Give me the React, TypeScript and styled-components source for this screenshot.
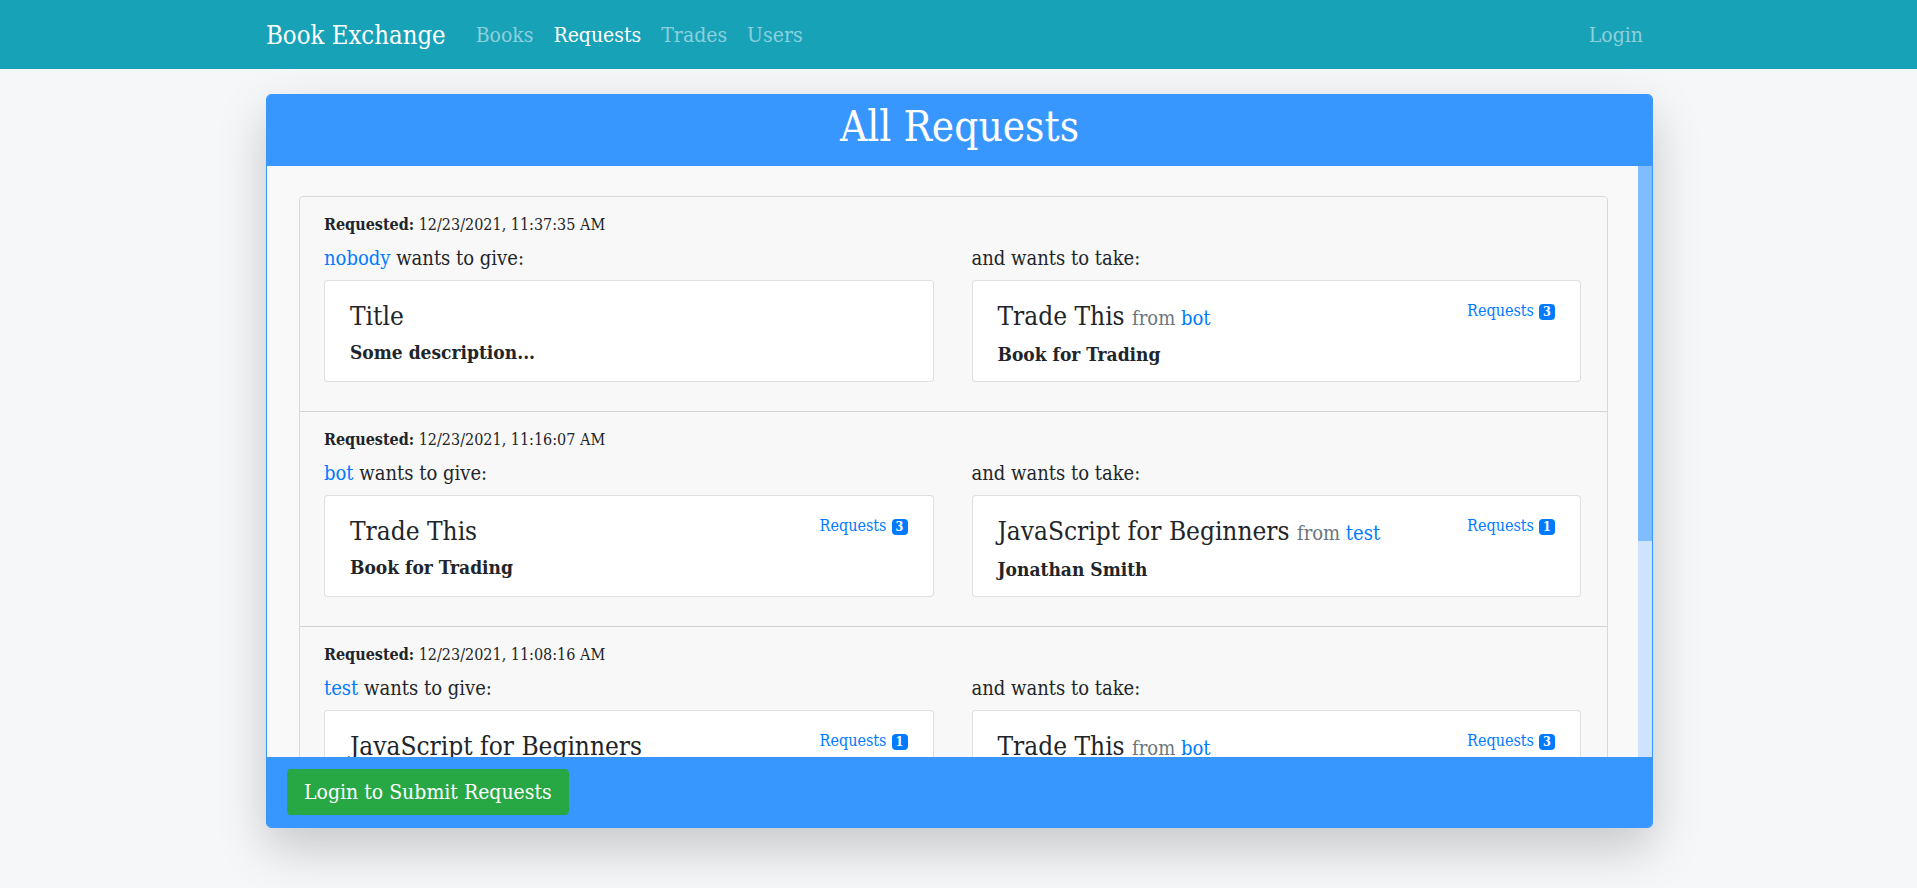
import React from "react";
import styled, { createGlobalStyle } from "styled-components";

const GlobalStyle = createGlobalStyle`
  html, body {
    margin: 0;
    padding: 0;
  }
  body {
    min-height: 100vh;
    background: #f6f7f9;
    font-family: "DejaVu Serif Condensed", "DejaVu Serif", serif;
    font-stretch: condensed;
    font-size: 20px;
    line-height: 1.5;
    color: #212529;
  }
  * { box-sizing: border-box; }
`;

const NavBar = styled.nav`
  background: #17a2b8;
  height: 69px;
`;

const NavInner = styled.div`
  width: 1389px;
  margin: 0 auto;
  padding-left: 2px;
  height: 100%;
  display: flex;
  align-items: center;
`;

const Brand = styled.a`
  font-size: 25.5px;
  line-height: 36px;
  color: #fff;
  margin-right: 20px;
  text-decoration: none;
`;

const NavLinks = styled.div`
  display: flex;
  align-items: center;
  flex: 1;
`;

const NavLink = styled.a<{ $active?: boolean }>`
  padding: 0 10px;
  font-size: 21px;
  line-height: 30px;
  color: ${(p) => (p.$active ? "#ffffff" : "rgba(255, 255, 255, 0.5)")};
  text-decoration: none;
`;

const Main = styled.main`
  width: 1389px;
  margin: 0 auto;
  padding: 25px 0 40px 2px;
`;

const Panel = styled.section`
  height: 734px;
  border: 1px solid #3797ff;
  border-radius: 5px;
  overflow: hidden;
  display: flex;
  flex-direction: column;
  background: #f9f9f9;
  box-shadow: 0 20px 50px rgba(0, 0, 0, 0.2);
`;

const PanelHeader = styled.header`
  height: 71px;
  flex: none;
  background: #3797ff;
  padding-top: 7px;
`;

const PanelTitle = styled.h1`
  margin: 0;
  font-size: 42px;
  line-height: 50px;
  font-weight: normal;
  color: #fff;
  text-align: center;
`;

const ScrollRow = styled.div`
  flex: 1;
  min-height: 0;
  display: flex;
`;

const ScrollContent = styled.div`
  flex: 1;
  min-width: 0;
  overflow: hidden;
  padding: 30px 30px 30px 32px;
  background: #f9f9f9;
`;

const ScrollTrack = styled.div`
  width: 14px;
  flex: none;
  background: #cfe4fc;
`;

const ScrollThumb = styled.div`
  width: 100%;
  background: #80bdff;
`;

const RequestList = styled.ul`
  list-style: none;
  margin: 0;
  padding: 0;
  border: 1px solid rgba(0, 0, 0, 0.125);
  border-radius: 4px;
  overflow: hidden;
`;

const RequestRow = styled.li`
  background: #f8f8f8;
  padding: 16px 26px 29px 24px;

  & + & {
    border-top: 1px solid rgba(0, 0, 0, 0.15);
  }
`;

const MetaLine = styled.div`
  font-size: 16px;
  line-height: 24px;
  margin-bottom: 6px;
`;

const Columns = styled.div`
  display: grid;
  grid-template-columns: 1fr 1fr;
  column-gap: 38px;
`;

const Label = styled.div`
  font-size: 20px;
  line-height: 30px;
  margin-bottom: 7px;
`;

const UserLink = styled.a`
  color: #007bff;
  text-decoration: none;
`;

const BookCard = styled.div`
  background: #fff;
  border: 1px solid rgba(0, 0, 0, 0.125);
  border-radius: 4px;
  padding: 20px 25px 17px;
  height: 102px;
`;

const CardTop = styled.div`
  display: flex;
  justify-content: space-between;
  align-items: flex-start;
`;

const BookTitle = styled.h5`
  margin: 0 0 8px;
  font-size: 26px;
  line-height: 31px;
  font-weight: normal;
  color: #212529;
`;

const From = styled.small`
  font-size: 20px;
  color: #6c757d;
`;

const RequestsLink = styled.a`
  font-size: 16px;
  line-height: 19px;
  color: #007bff;
  text-decoration: none;
  white-space: nowrap;
`;

const Badge = styled.span`
  display: inline-block;
  min-width: 16px;
  height: 16px;
  line-height: 16px;
  padding: 0 3px;
  margin-left: 5px;
  border-radius: 4px;
  background: #007bff;
  color: #fff;
  font-size: 12.5px;
  font-weight: bold;
  text-align: center;
`;

const Description = styled.div`
  font-size: 19px;
  line-height: 24px;
  font-weight: bold;
`;

const PanelFooter = styled.footer`
  height: 70px;
  flex: none;
  background: #3797ff;
  padding: 12px 20px;
`;

const GreenButton = styled.button`
  font-family: inherit;
  font-stretch: condensed;
  font-size: 21px;
  line-height: 30px;
  padding: 7px 16px;
  color: #fff;
  background: #28a745;
  border: 1px solid #28a745;
  border-radius: 4px;
  cursor: pointer;
`;

type Book = {
  title: string;
  desc: string;
  owner?: string;
  requests?: number;
};

type Request = {
  time: string;
  user: string;
  give: Book;
  take: Book;
};

const requests: Request[] = [
  {
    time: "12/23/2021, 11:37:35 AM",
    user: "nobody",
    give: { title: "Title", desc: "Some description..." },
    take: { title: "Trade This", desc: "Book for Trading", owner: "bot", requests: 3 },
  },
  {
    time: "12/23/2021, 11:16:07 AM",
    user: "bot",
    give: { title: "Trade This", desc: "Book for Trading", requests: 3 },
    take: { title: "JavaScript for Beginners", desc: "Jonathan Smith", owner: "test", requests: 1 },
  },
  {
    time: "12/23/2021, 11:08:16 AM",
    user: "test",
    give: { title: "JavaScript for Beginners", desc: "Jonathan Smith", requests: 1 },
    take: { title: "Trade This", desc: "Book for Trading", owner: "bot", requests: 3 },
  },
  {
    time: "12/22/2021, 10:42:03 PM",
    user: "nobody",
    give: { title: "Title", desc: "Some description..." },
    take: { title: "JavaScript for Beginners", desc: "Jonathan Smith", owner: "test", requests: 1 },
  },
];

// visible height of the scroll area vs. full height of its content
const VIEWPORT_HEIGHT = 591;
const CONTENT_HEIGHT = 931;

function BookBox({ book }: { book: Book }) {
  return (
    <BookCard>
      <CardTop>
        <BookTitle>
          {book.title}
          {book.owner && (
            <>
              {" "}
              <From>
                from <UserLink href="#">{book.owner}</UserLink>
              </From>
            </>
          )}
        </BookTitle>
        {book.requests !== undefined && (
          <RequestsLink href="#">
            Requests<Badge>{book.requests}</Badge>
          </RequestsLink>
        )}
      </CardTop>
      <Description>{book.desc}</Description>
    </BookCard>
  );
}

export default function App() {
  const thumbHeight = Math.round((VIEWPORT_HEIGHT * VIEWPORT_HEIGHT) / CONTENT_HEIGHT);
  return (
    <>
      <GlobalStyle />
      <NavBar>
        <NavInner>
          <Brand href="#">Book Exchange</Brand>
          <NavLinks>
            <NavLink href="#">Books</NavLink>
            <NavLink href="#" $active>
              Requests
            </NavLink>
            <NavLink href="#">Trades</NavLink>
            <NavLink href="#">Users</NavLink>
          </NavLinks>
          <NavLink href="#">Login</NavLink>
        </NavInner>
      </NavBar>
      <Main>
        <Panel>
          <PanelHeader>
            <PanelTitle>All Requests</PanelTitle>
          </PanelHeader>
          <ScrollRow>
            <ScrollContent>
              <RequestList>
                {requests.map((r, i) => (
                  <RequestRow key={i}>
                    <MetaLine>
                      <b>Requested:</b> {r.time}
                    </MetaLine>
                    <Columns>
                      <div>
                        <Label>
                          <UserLink href="#">{r.user}</UserLink> wants to give:
                        </Label>
                        <BookBox book={r.give} />
                      </div>
                      <div>
                        <Label>and wants to take:</Label>
                        <BookBox book={r.take} />
                      </div>
                    </Columns>
                  </RequestRow>
                ))}
              </RequestList>
            </ScrollContent>
            <ScrollTrack>
              <ScrollThumb style={{ height: thumbHeight }} />
            </ScrollTrack>
          </ScrollRow>
          <PanelFooter>
            <GreenButton>Login to Submit Requests</GreenButton>
          </PanelFooter>
        </Panel>
      </Main>
    </>
  );
}
